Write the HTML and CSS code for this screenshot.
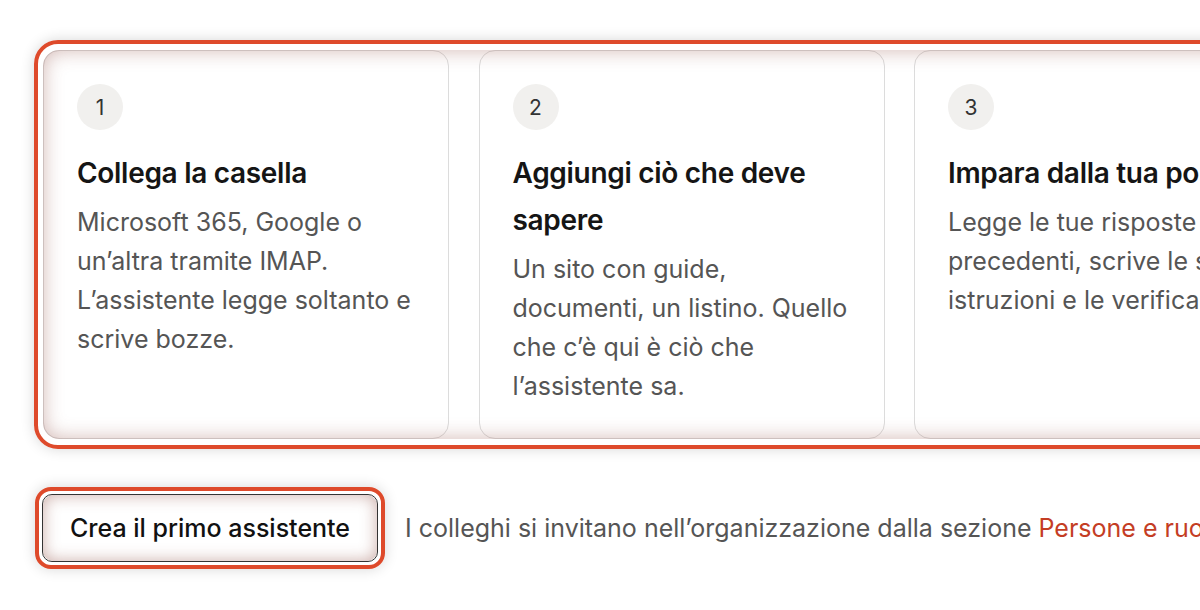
FILE: index.html
```
<!DOCTYPE html>
<html lang="it">
  <head>
    <meta charset="UTF-8" />
    <meta name="viewport" content="width=device-width, initial-scale=1.0" />
    <title>Primi passi</title>
    <link rel="stylesheet" href="styles.css">
  </head>
  <body>
    <main class="page">
      <ol class="steps">
        <li class="step">
          <span class="step-num">1</span>
          <h3>Collega la casella</h3>
          <p>Microsoft 365, Google o un’altra tramite IMAP. L’assistente legge soltanto e scrive bozze.</p>
        </li>
        <li class="step">
          <span class="step-num">2</span>
          <h3>Aggiungi ciò che deve sapere</h3>
          <p>Un sito con guide, documenti, un listino. Quello che c’è qui è ciò che l’assistente sa.</p>
        </li>
        <li class="step">
          <span class="step-num">3</span>
          <h3>Impara dalla tua posta</h3>
          <p>Legge le tue risposte precedenti, scrive le sue istruzioni e le verifica.</p>
        </li>
      </ol>

      <div class="actions">
        <button class="btn" type="button">Crea il primo assistente</button>
        <p class="hint">I colleghi si invitano nell’organizzazione dalla sezione <a href="/persone">Persone e ruoli</a>.</p>
      </div>
    </main>
  </body>
</html>
```

FILE: styles.css
```
html, body {
  margin: 0;
  padding: 0;
  background: #fff;
  font-family: Inter, "Noto Sans", sans-serif;
  color: #555;
}

.page {
  box-sizing: border-box;
  height: 610px;
  padding: 50px 0 0 43px;
  overflow: hidden;
}

/* three step cards */
.steps {
  list-style: none;
  margin: 0;
  padding: 0;
  display: grid;
  grid-template-columns: repeat(3, 406px);
  gap: 29.5px;
  position: relative;
  width: max-content;
  border-radius: 16px;
}

/* highlight ring round the cards and the button */
.steps::before,
.btn::before {
  content: "";
  position: absolute;
  border: 4px solid #de4a2b;
  box-shadow: 0 0 14px rgba(0, 0, 0, 0.16);
  pointer-events: none;
}
.steps::before {
  inset: -10px -10px -10px -9px;
  border-radius: 24px;
}

.steps::after,
.btn::after {
  content: "";
  position: absolute;
  inset: 0;
  pointer-events: none;
}
.steps::after {
  border-radius: 16px;
  box-shadow: inset 0 0 20px rgba(140, 70, 60, 0.4);
}

.step {
  background: #fff;
  border: 1px solid #dcdcdc;
  border-radius: 16px;
  padding: 33px 32px 32px 33px;
}

.step-num {
  display: flex;
  justify-content: center;
  align-items: center;
  width: 46px;
  height: 46px;
  border-radius: 50%;
  background: #f1f0ee;
  color: #333;
  font-size: 21px;
}

.step h3 {
  margin: 20px 0 6px;
  font-size: 28px;
  line-height: 47px;
  font-weight: 600;
  color: #151515;
  letter-spacing: -0.3px;
}

.step p {
  margin: 0;
  font-size: 25px;
  line-height: 39px;
  color: #555;
}

/* call to action row */
.actions {
  display: flex;
  align-items: center;
  gap: 27px;
  margin-top: 55px;
  margin-left: -1px;
}

.btn {
  position: relative;
  flex: none;
  height: 68px;
  width: 336px;
  background: #fff;
  border: 1px solid #333;
  border-radius: 10px;
  font-family: Inter, "Noto Sans", sans-serif;
  font-size: 25px;
  font-weight: 500;
  color: #111;
  cursor: pointer;
}
.btn::before {
  inset: -8px;
  border-radius: 16px;
}
.btn::after {
  border-radius: 10px;
  box-shadow: inset 0 0 16px rgba(140, 70, 60, 0.45);
}

.hint {
  margin: 0;
  font-size: 25px;
  white-space: nowrap;
  color: #555;
}

.hint a {
  color: #c43d24;
  text-decoration: none;
}
```
